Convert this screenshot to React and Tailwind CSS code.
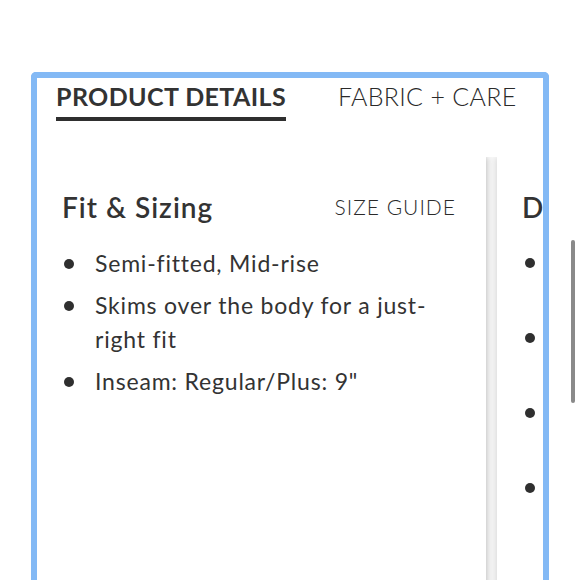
import React from "react";

const items = [
  ["Semi-fitted, Mid-rise"],
  ["Skims over the body for a just-", "right fit"],
  ['Inseam: Regular/Plus: 9"'],
];

function Bullet({ lines }) {
  return (
    <li className="flex">
      <span className="w-[33px] shrink-0 flex pl-[2px] pt-[13px]">
        <span className="block w-[10px] h-[10px] rounded-full bg-[#2f2f2f]" />
      </span>
      <span className="flex flex-col">
        {lines.map((l, i) => (
          <span key={i} className="leading-[34px]">{l}</span>
        ))}
      </span>
    </li>
  );
}

export default function App() {
  return (
    <div className="relative w-[580px] h-[580px] overflow-hidden bg-white text-[#333]" style={{ fontFamily: "Lato, 'Open Sans', sans-serif" }}>
      <div className="absolute left-[31px] top-[72px] w-[518px] h-[560px] border-[6px] border-b-0 border-[#83b9f5] rounded-t-[5px] bg-white flex flex-col">
        <div className="h-[79px] flex items-start pl-[19px] gap-[52px] pt-[1px]">
          <div className="flex flex-col">
            <span className="text-[25px] font-bold leading-[34px] tracking-[0.4px]">PRODUCT DETAILS</span>
            <span className="block h-[4px] bg-[#2f2f2f] mt-[4px]" />
          </div>
          <span className="text-[25px] font-light leading-[34px] tracking-[0.3px] text-[#2a2a2a]">FABRIC + CARE</span>
        </div>
        <div className="flex-1 flex gap-[11px] overflow-hidden bg-[#fafafa]">
          <div className="w-[449px] shrink-0 bg-white shadow-[2px_0_6px_rgba(0,0,0,0.18),0_-1px_2px_rgba(0,0,0,0.06)] pl-[25px] pr-[30px] pt-[30px]">
            <div className="flex items-center justify-between">
              <span className="text-[28px] font-semibold leading-[40px] tracking-[1px] text-[#333]">Fit &amp; Sizing</span>
              <span className="text-[21px] font-light tracking-[1px] leading-[40px] text-[#2a2a2a]">SIZE GUIDE</span>
            </div>
            <ul className="mt-[19px] flex flex-col gap-[8px] text-[23px] tracking-[0.8px] font-normal text-[#333]">
              {items.map((l, i) => (
                <Bullet key={i} lines={l} />
              ))}
            </ul>
          </div>
          <div className="w-[449px] shrink-0 bg-white shadow-[-2px_0_6px_rgba(0,0,0,0.12)] pl-[25px] pt-[30px]">
            <span className="text-[28px] font-semibold leading-[40px] tracking-[1px]">Details</span>
            <div className="mt-[19px] flex flex-col">
              {[0, 1, 2, 3].map((i) => (
                <div key={i} className="h-[75px] flex pt-[12px] pl-[3px]">
                  <span className="block w-[10px] h-[10px] rounded-full bg-[#2f2f2f]" />
                </div>
              ))}
            </div>
          </div>
        </div>
      </div>
      <div className="absolute left-[571px] top-[240px] w-[4px] h-[163px] rounded-full bg-[#8a8a8a]" />
    </div>
  );
}
